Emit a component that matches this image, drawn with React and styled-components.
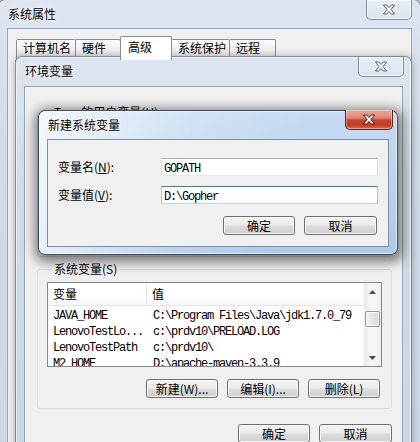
import styled, { createGlobalStyle } from 'styled-components';

const GlobalStyle = createGlobalStyle`
  html, body { margin: 0; padding: 0; background: #cdd9e6; }
  body {
    font-family: "Noto Sans CJK SC", "Noto Sans", sans-serif;
    font-size: 12px;
    color: #000;
  }
`;

const glassInactive = 'linear-gradient(180deg, #dde6f0 0%, #d0dce8 30%, #cad7e5 100%)';
const glassActive =
  'linear-gradient(100deg, rgba(255,255,255,0.8) 0%, rgba(255,255,255,0.2) 40%, rgba(255,255,255,0) 70%), linear-gradient(180deg, #c7dcf2 0%, #adc9e9 100%)';

const Desktop = styled.div`
  position: relative;
  width: 420px;
  height: 442px;
  overflow: hidden;
  background: #cdd9e6;
`;

// windows lie over each other on the desktop, so they are placed by coordinates
const Frame = styled.div`
  position: absolute;
  left: ${p => p.$x}px;
  top: ${p => p.$y}px;
  width: ${p => p.$w}px;
  height: ${p => p.$h}px;
  box-sizing: border-box;
  display: flex;
  flex-direction: column;
  border: 1px solid ${p => (p.$active ? 'rgba(25,40,60,0.8)' : 'rgba(70,85,105,0.6)')};
  border-radius: 7px;
  background: ${p => (p.$active ? glassActive : glassInactive)};
  box-shadow: inset 0 0 0 1px rgba(255,255,255,0.55), ${p => p.$shadow || 'none'};
`;

const TitleBar = styled.div`
  height: ${p => p.$h}px;
  flex: none;
  display: flex;
  justify-content: space-between;
  align-items: flex-start;
  padding-left: ${p => p.$pad}px;
`;

const Title = styled.div`
  padding-top: 6px;
  line-height: 16px;
  text-shadow: 0 0 6px rgba(255,255,255,0.95), 0 0 2px rgba(255,255,255,0.9);
`;

const CloseButton = styled.div`
  box-sizing: border-box;
  width: ${p => p.$w}px;
  height: 20px;
  margin-top: ${p => p.$top}px;
  margin-right: ${p => p.$right}px;
  display: flex;
  align-items: center;
  justify-content: center;
  border: 1px solid ${p => (p.$active ? '#5c2a22' : 'rgba(90,105,125,0.7)')};
  border-top: none;
  border-radius: 0 0 5px 5px;
  background: ${p =>
    p.$active
      ? 'linear-gradient(180deg, #e8a899 0%, #dc8a77 40%, #c7432a 55%, #c43c22 80%, #d6705a 100%)'
      : 'linear-gradient(180deg, rgba(255,255,255,0.35) 0%, rgba(255,255,255,0.15) 50%, rgba(255,255,255,0.05) 100%)'};
  box-shadow: inset 0 0 0 1px rgba(255,255,255,${p => (p.$active ? 0.35 : 0.6)});
`;

const Client = styled.div`
  flex: 1;
  min-height: 0;
  margin: 0 8px ${p => p.$bottom ?? 8}px;
  border: 1px solid ${p => (p.$active ? '#7f8fa3' : '#99a6b6')};
  background: #f0f0f0;
  display: flex;
  flex-direction: column;
  overflow: hidden;
`;

const CloseGlyph = ({ dark }) => (
  <svg width="14" height="11" viewBox="0 0 14 11">
    <path
      d="M1.5 1h3.2l2.3 2.6L9.3 1h3.2L9 5.5l3.5 4.5H9.3L7 7.4 4.7 10H1.5L5 5.5z"
      fill="#fff"
      stroke={dark ? '#3b1a14' : '#56606d'}
      strokeWidth="1"
      strokeLinejoin="round"
    />
  </svg>
);

/* ---- window 1 : tabs ---- */

const TabStrip = styled.div`
  display: flex;
  align-items: flex-end;
  padding: 7px 0 0 9px;
`;

const Tab = styled.div`
  box-sizing: border-box;
  width: ${p => p.$w}px;
  height: ${p => (p.$selected ? 24 : 21)}px;
  margin-left: -1px;
  padding: ${p => (p.$selected ? '2px 0 0 7px' : '0 0 0 6px')};
  border: 1px solid #898c95;
  border-bottom: none;
  border-radius: 2px 2px 0 0;
  line-height: 16px;
  background: ${p => (p.$selected ? '#fff' : 'linear-gradient(180deg, #fdfdfd 0%, #eeeeee 50%, #e3e3e3 100%)')};
  position: relative;
  z-index: ${p => (p.$selected ? 1 : 0)};
`;

const TabPanel = styled.div`
  margin: 0 7px;
  height: 376px;
  border: 1px solid #898c95;
  background: #fcfcfc;
`;

/* ---- shared controls ---- */

const Button = styled.button`
  box-sizing: border-box;
  width: ${p => p.$w || 73}px;
  height: 19px;
  padding: 0;
  font: inherit;
  font-size: 12px;
  line-height: 16px;
  color: #000;
  border: 1px solid #707070;
  border-radius: 3px;
  background: linear-gradient(180deg, #f3f3f3 0%, #ebebeb 48%, #dddddd 52%, #cfcfcf 100%);
  box-shadow: inset 0 0 0 1px rgba(255,255,255,0.75);
`;

const ButtonRow = styled.div`
  display: flex;
  justify-content: flex-end;
  gap: ${p => p.$gap || 9}px;
  margin-top: ${p => p.$top}px;
  padding-right: ${p => p.$right || 0}px;
`;

const Mono = styled.span`
  font-family: "Liberation Mono", "Courier New", monospace;
  font-size: 12px;
  letter-spacing: -1.2px;
`;

const Key = styled.span`
  text-decoration: underline;
  text-underline-offset: 1px;
`;

/* ---- window 2 : environment variables ---- */

const EnvBody = styled.div`
  padding: 17px 10px 0 12px;
  display: flex;
  flex-direction: column;
`;

const Group = styled.fieldset`
  margin: ${p => p.$top || 0}px 0 0;
  padding: 5px 9px 10px;
  border: 1px solid #d5dfe5;
  border-radius: 3px;
  min-width: 0;
  box-sizing: border-box;
  ${p => (p.$h ? `height: ${p.$h}px;` : '')}
`;

const Legend = styled.legend`
  margin-left: 5px;
  padding: 0 2px;
  line-height: 16px;
`;

const ListView = styled.div`
  height: ${p => p.$h}px;
  box-sizing: border-box;
  border: 1px solid #828790;
  background: #fff;
  display: flex;
`;

const ListMain = styled.div`
  flex: 1;
  display: flex;
  flex-direction: column;
  min-width: 0;
`;

const HeaderRow = styled.div`
  height: 22px;
  flex: none;
  display: flex;
  border-bottom: 1px solid #e5e5e5;
  background: linear-gradient(180deg, #ffffff 0%, #ffffff 60%, #f6f7f9 100%);
`;

const HeaderCell = styled.div`
  box-sizing: border-box;
  width: ${p => (p.$w ? `${p.$w}px` : 'auto')};
  flex: ${p => (p.$w ? 'none' : 1)};
  padding-left: 5px;
  line-height: 22px;
  border-right: ${p => (p.$w ? '1px solid #e3e8ee' : 'none')};
`;

const Rows = styled.div`
  flex: 1;
  overflow: hidden;
  padding-top: 2px;
`;

const Row = styled.div`
  display: flex;
  height: 16px;
  line-height: 16px;
  white-space: nowrap;
`;

const Cell = styled(Mono)`
  box-sizing: border-box;
  width: ${p => (p.$w ? `${p.$w}px` : 'auto')};
  flex: ${p => (p.$w ? 'none' : 1)};
  padding-left: 5px;
  overflow: hidden;
`;

const ScrollBar = styled.div`
  width: 17px;
  flex: none;
  display: flex;
  flex-direction: column;
  background: linear-gradient(90deg, #e8e8e8 0%, #f5f5f5 30%, #f5f5f5 70%, #ececec 100%);
`;

const ScrollArrow = styled.div`
  height: 17px;
  flex: none;
  display: flex;
  align-items: center;
  justify-content: center;
`;

const ScrollTrack = styled.div`
  flex: 1;
  padding: 11px 1px 0 1px;
`;

const Thumb = styled.div`
  height: 16px;
  box-sizing: border-box;
  border: 1px solid #979797;
  border-radius: 2px;
  background: linear-gradient(90deg, #f1f1f1 0%, #e6e6e6 50%, #d8d8d8 100%);
  box-shadow: inset 0 0 0 1px rgba(255,255,255,0.8);
`;

const Arrow = ({ down }) => (
  <svg width="7" height="4" viewBox="0 0 7 4">
    <path d={down ? 'M0 0h7L3.5 4z' : 'M0 4h7L3.5 0z'} fill="#4a4a4a" />
  </svg>
);

/* ---- window 3 : new system variable ---- */

const FormBody = styled.div`
  padding: 18px 10px 0 10px;
`;

const FieldGrid = styled.div`
  display: grid;
  grid-template-columns: 1fr 217px;
  row-gap: 10px;
  align-items: center;
`;

const Label = styled.div`
  line-height: 16px;
`;

const TextBox = styled.div`
  box-sizing: border-box;
  height: 18px;
  padding-left: 2px;
  line-height: 16px;
  background: #fff;
  border: 1px solid ${p => (p.$focus ? '#a4c9e3' : '#dbdfe6')};
  border-top-color: ${p => (p.$focus ? '#3d7bad' : '#abadb3')};
  border-bottom-color: ${p => (p.$focus ? '#b7d9ed' : '#e3e9ef')};
  white-space: nowrap;
`;

const systemVars = [
  ['JAVA_HOME', 'C:\\Program Files\\Java\\jdk1.7.0_79'],
  ['LenovoTestLo...', 'c:\\prdv10\\PRELOAD.LOG'],
  ['LenovoTestPath', 'c:\\prdv10\\'],
  ['M2_HOME', 'D:\\apache-maven-3.3.9'],
  ['NUMBER_OF_P...', '4'],
];

const userVars = [
  ['PATH', 'D:\\Go\\bin'],
  ['TEMP', '%USERPROFILE%\\AppData\\Local\\Temp'],
  ['TMP', '%USERPROFILE%\\AppData\\Local\\Temp'],
];

const VarList = ({ items, height }) => (
  <ListView $h={height}>
    <ListMain>
      <HeaderRow>
        <HeaderCell $w={99}>变量</HeaderCell>
        <HeaderCell>值</HeaderCell>
      </HeaderRow>
      <Rows>
        {items.map(([k, v]) => (
          <Row key={k}>
            <Cell $w={100}>{k}</Cell>
            <Cell>{v}</Cell>
          </Row>
        ))}
      </Rows>
    </ListMain>
    <ScrollBar>
      <ScrollArrow><Arrow /></ScrollArrow>
      <ScrollTrack><Thumb /></ScrollTrack>
      <ScrollArrow><Arrow down /></ScrollArrow>
    </ScrollBar>
  </ListView>
);

const tabs = [
  ['计算机名', 60],
  ['硬件', 46],
  ['高级', 52, true],
  ['系统保护', 59],
  ['远程', 47],
];

const App = () => (
  <>
    <GlobalStyle />
    <Desktop>
      <Frame $x={-2} $y={-1} $w={423} $h={470}>
        <TitleBar $h={28} $pad={9}>
          <Title>系统属性</Title>
          <CloseButton $w={46} $top={0} $right={8}><CloseGlyph /></CloseButton>
        </TitleBar>
        <Client>
          <TabStrip>
            {tabs.map(([t, w, sel]) => (
              <Tab key={t} $w={w} $selected={sel}>{t}</Tab>
            ))}
          </TabStrip>
          <TabPanel />
        </Client>
      </Frame>

      <Frame $x={15} $y={56} $w={397} $h={420} $shadow="0 0 7px rgba(0,0,0,0.3)">
        <TitleBar $h={29} $pad={9}>
          <Title>环境变量</Title>
          <CloseButton $w={46} $top={0} $right={7}><CloseGlyph /></CloseButton>
        </TitleBar>
        <Client>
          <EnvBody>
            <Group $h={153}>
              <Legend>Tom 的用户变量(U)</Legend>
              <VarList items={userVars} height={85} />
            </Group>
            <Group $top={4}>
              <Legend>系统变量(S)</Legend>
              <VarList items={systemVars} height={85} />
              <ButtonRow $top={12} $right={2}>
                <Button $w={72}>新建(W)...</Button>
                <Button $w={72}>编辑(I)...</Button>
                <Button $w={72}>删除(L)</Button>
              </ButtonRow>
            </Group>
            <ButtonRow $top={15}>
              <Button $w={72}>确定</Button>
              <Button $w={73}>取消</Button>
            </ButtonRow>
          </EnvBody>
        </Client>
      </Frame>

      <Frame
        $x={38}
        $y={110}
        $w={360}
        $h={145}
        $active
        $shadow="1px 3px 12px 4px rgba(0,0,0,0.5)"
      >
        <TitleBar $h={28} $pad={9}>
          <Title>新建系统变量</Title>
          <CloseButton $active $w={48} $top={-1} $right={4}><CloseGlyph dark /></CloseButton>
        </TitleBar>
        <Client $active $bottom={7}>
          <FormBody>
            <FieldGrid>
              <Label>变量名(<Key>N</Key>):</Label>
              <TextBox><Mono>GOPATH</Mono></TextBox>
              <Label>变量值(<Key>V</Key>):</Label>
              <TextBox $focus><Mono>D:\Gopher</Mono></TextBox>
            </FieldGrid>
            <ButtonRow $top={12} $right={1}>
              <Button $w={72}>确定</Button>
              <Button $w={73}>取消</Button>
            </ButtonRow>
          </FormBody>
        </Client>
      </Frame>
    </Desktop>
  </>
);

export default App;
